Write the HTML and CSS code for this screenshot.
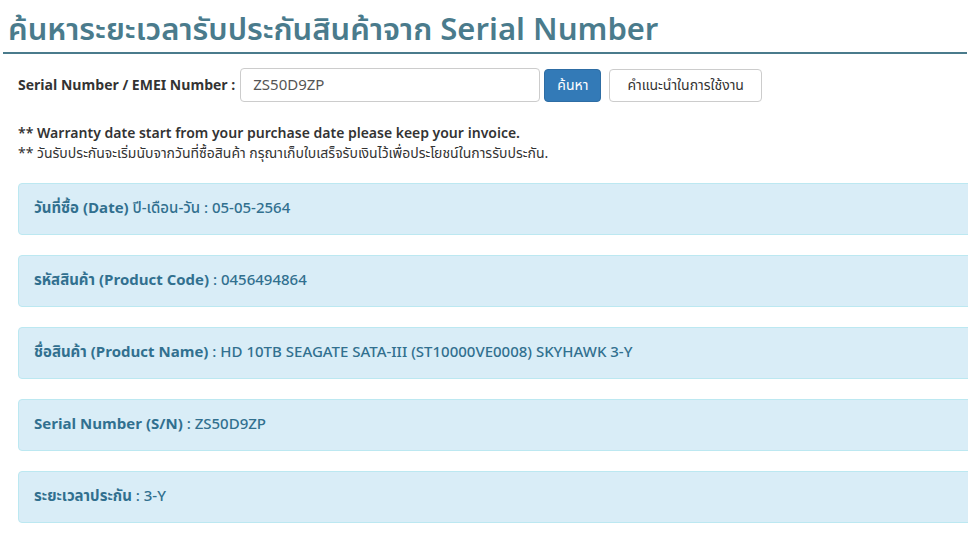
FILE: index.html
```html
<!DOCTYPE html>
<html lang="th">
<head>
<meta charset="utf-8">
<title>Warranty</title>
<link rel="stylesheet" href="styles.css">
</head>
<body>
<div class="page">
  <h1 class="title">ค้นหาระยะเวลารับประกันสินค้าจาก Serial Number</h1>
  <div class="content">
    <form class="search">
      <label class="search-label">Serial Number / EMEI Number :</label>
      <input class="search-input" type="text" value="ZS50D9ZP">
      <button class="btn btn-primary" type="button">ค้นหา</button>
      <button class="btn btn-default" type="button">คำแนะนำในการใช้งาน</button>
    </form>
    <p class="note-en">** Warranty date start from your purchase date please keep your invoice.</p>
    <p class="note-th">** วันรับประกันจะเริ่มนับจากวันที่ซื้อสินค้า กรุณาเก็บใบเสร็จรับเงินไว้เพื่อประโยชน์ในการรับประกัน.</p>
    <div class="results">
      <div class="alert"><b>วันที่ซื้อ (Date)</b> ปี-เดือน-วัน : 05-05-2564</div>
      <div class="alert"><b>รหัสสินค้า (Product Code)</b> : 0456494864</div>
      <div class="alert"><b>ชื่อสินค้า (Product Name)</b> : HD 10TB SEAGATE SATA-III (ST10000VE0008) SKYHAWK 3-Y</div>
      <div class="alert"><b>Serial Number (S/N)</b> : ZS50D9ZP</div>
      <div class="alert"><b>ระยะเวลาประกัน</b> : 3-Y</div>
    </div>
  </div>
</div>
</body>
</html>
```
FILE: styles.css
```css
* { box-sizing: border-box; }
html, body { margin: 0; padding: 0; background: #fff; }
body {
  font-family: "Noto Sans Thai", "Noto Sans", "Open Sans", sans-serif;
  font-size: 14px;
  color: #333;
  overflow: hidden;
}
.page { width: 988px; padding: 14px 0 0 3px; }
.title {
  margin: 0;
  padding: 0 0 4px 5px;
  font-size: 31px;
  font-weight: 600;
  line-height: 34px;
  color: #4a7b8c;
  border-bottom: 2px solid #4a7b8c;
  width: 964px;
}
.content { padding: 14px 0 0 15px; }
.search { display: flex; align-items: center; margin: 0; }
.search-label { font-weight: 700; font-size: 14px; margin-right: 5px; color: #333; }
.search-input {
  width: 300px; height: 34px;
  border: 1px solid #ccc; border-radius: 4px;
  padding: 6px 12px;
  font: inherit; font-size: 15px; color: #555;
  margin-right: 4px;
}
.btn {
  height: 33px;
  border-radius: 4px;
  font: inherit; font-size: 14px;
  padding: 0 12px;
  margin-right: 8px;
}
.btn-primary { background: #337ab7; border: 1px solid #2e6da4; color: #fff; }
.btn-default { background: #fff; border: 1px solid #ccc; color: #333; padding: 0 17px; }
.note-en { margin: 22px 0 0; font-size: 14px; font-weight: 600; line-height: 20px; }
.note-th { margin: 0 0 19px; font-size: 14px; line-height: 20px; }
.results { width: 980px; }
.alert {
  background: #d9edf7;
  border: 1px solid #bce8f1;
  border-radius: 4px;
  color: #31708f;
  padding: 15px;
  line-height: 20px;
  margin-bottom: 20px;
  font-size: 15px;
  font-weight: 500;
}
.alert b { font-weight: 700; }
```
